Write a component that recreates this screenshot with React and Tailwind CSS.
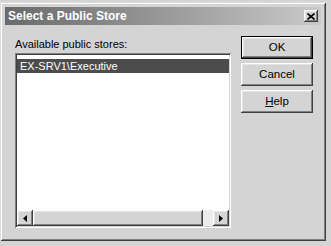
import React from 'react'

const raised =
  'bg-[#d4d4d4] shadow-[inset_-1px_-1px_#404040,inset_1px_1px_#ffffff,inset_-2px_-2px_#808080,inset_2px_2px_#e4e4e4]'

function Arrow({ dir }) {
  return (
    <svg width="4" height="7" viewBox="0 0 4 7">
      {dir === 'left' ? <path d="M4 0 L0 3.5 L4 7 Z" fill="#000" /> : <path d="M0 0 L4 3.5 L0 7 Z" fill="#000" />}
    </svg>
  )
}

function Button({ children, isDefault }) {
  return (
    <div className={isDefault ? 'border border-black' : ''}>
      <div
        className={`${raised} flex items-center justify-center text-[11.5px] text-black ${
          isDefault ? 'h-[21px]' : 'h-[23px]'
        }`}
      >
        {children}
      </div>
    </div>
  )
}

export default function App() {
  return (
    <div className="w-[331px] h-[246px] bg-[#d4d4d4] pt-[2px] font-['Liberation_Sans',Arial,sans-serif]">
      <div className="w-[326px] h-[239px] bg-[#d4d4d4] p-[5px] shadow-[inset_1px_1px_#dcdcdc,inset_-1px_-1px_#404040,inset_2px_2px_#ffffff,inset_-2px_-2px_#808080]">
        {/* Title bar */}
        <div className="h-[18px] flex items-center justify-between pl-[3px] pr-[3px] bg-gradient-to-r from-[#6a6a6a] to-[#cacaca]">
          <span className="text-white font-bold text-[12px] leading-none">Select a Public Store</span>
          <div className={`${raised} w-[14px] h-[12px] flex items-center justify-center`}>
            <svg width="8" height="7" viewBox="0 0 8 7">
              <path d="M0.5 0.5 L7.5 6.5 M7.5 0.5 L0.5 6.5" stroke="#000" strokeWidth="1.6" />
            </svg>
          </div>
        </div>

        {/* Body */}
        <div className="flex pt-[11px] pl-[10px] gap-[10px]">
          <div className="w-[216px] pt-[2px]">
            <div className="h-[13px] text-[11px] leading-[13px] text-black mb-[2px]">Available public stores:</div>
            <div className="h-[175px] bg-white p-[2px] flex flex-col shadow-[inset_1px_1px_#808080,inset_-1px_-1px_#ffffff,inset_2px_2px_#404040,inset_-2px_-2px_#d4d4d4]">
              <div className="flex-1 pt-[4px]">
                <div className="h-[14px] bg-[#4c4c4c] text-white text-[11px] leading-[14px] pl-[3px]">
                  EX-SRV1\Executive
                </div>
              </div>
              <div className="h-[16px] flex bg-[#ececec]">
                <div className={`${raised} w-[16px] h-[16px] flex items-center justify-center`}>
                  <Arrow dir="left" />
                </div>
                <div className={`${raised} w-[170px] h-[16px]`} />
                <div className="flex-1" />
                <div className={`${raised} w-[16px] h-[16px] flex items-center justify-center`}>
                  <Arrow dir="right" />
                </div>
              </div>
            </div>
          </div>

          <div className="w-[72px] flex flex-col gap-[4px]">
            <Button isDefault>OK</Button>
            <Button>Cancel</Button>
            <Button>
              <span>
                <span className="underline">H</span>elp
              </span>
            </Button>
          </div>
        </div>
      </div>
    </div>
  )
}
